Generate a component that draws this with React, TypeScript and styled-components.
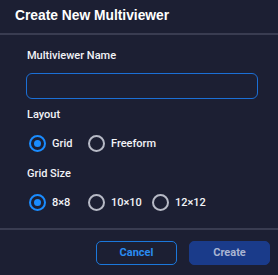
import { FC, useState } from 'react';
import styled, { createGlobalStyle } from 'styled-components';

const GlobalStyle = createGlobalStyle`
html, body {
margin:0;
padding:0;
background:#1c1f33;
}
body {
font-family: "Liberation Sans", Arial, sans-serif;
-webkit-font-smoothing: antialiased;
}
* { box-sizing:border-box; }
`;

/*----------Dialog--------------------*/
const Dialog = styled.div`
display:flex;
flex-direction:column;
width:278px;
height:275px;
background:#1c1f33;
color:#ffffff;
`;
/*----------Header--------------------*/
const Header = styled.div`
display:flex;
align-items:center;
height:35px;
padding:0 15px 2px 15px;
border-bottom:2px solid #393c51;
`;
const Title = styled.h2`
margin:0;
font-size:13.8px;
font-weight:700;
color:#ffffff;
`;
/*----------Body--------------------*/
const Body = styled.div`
display:flex;
flex-direction:column;
padding:14px 20px 0 26px;
flex:1;
`;
const Label = styled.div`
font-family: Roboto, "Liberation Sans", Arial, sans-serif;
font-size:11px;
font-weight:500;
color:#f2f3f7;
line-height:14px;
margin-left:1px;
`;
const NameInput = styled.input`
width:232px;
height:26px;
margin-top:10px;
background:transparent;
border:1.5px solid #1b6fd6;
border-radius:6px;
outline:none;
color:#fff;
font-family:inherit;
font-size:12px;
padding:0 8px;
`;
const Section = styled.div<{ $top: number }>`
display:flex;
flex-direction:column;
margin-top:${p => p.$top}px;
`;
const RadioRow = styled.div`
display:flex;
align-items:center;
margin-top:13px;
margin-left:3px;
`;
const RadioOption = styled.label<{ $width: number }>`
display:flex;
align-items:center;
width:${p => p.$width}px;
cursor:pointer;
font-family: Roboto, "Liberation Sans", Arial, sans-serif;
font-size:11px;
font-weight:500;
color:#f2f3f7;
`;
const RadioCircle = styled.span<{ $checked: boolean }>`
display:flex;
align-items:center;
justify-content:center;
width:17px;
height:17px;
border-radius:50%;
border:2px solid ${p => (p.$checked ? '#1a8cff' : '#b7bac6')};
margin-right:6px;
flex-shrink:0;
&::after {
content:'';
display:${p => (p.$checked ? 'block' : 'none')};
width:7px;
height:7px;
border-radius:50%;
background:#1a8cff;
}
`;
/*----------Footer--------------------*/
const Footer = styled.div`
display:flex;
justify-content:flex-end;
align-items:center;
gap:12px;
height:47px;
padding:0 8px 0 0;
border-top:2px solid #393c51;
`;
const Button = styled.button<{ $primary?: boolean }>`
width:81px;
height:24px;
border-radius:5px;
font-family: Roboto, "Liberation Sans", Arial, sans-serif;
font-size:11px;
font-weight:700;
cursor:pointer;
border:${p => (p.$primary ? '1.5px solid #1a3b8a' : '1.5px solid #1b78dc')};
background:${p => (p.$primary ? '#1a3b8a' : 'transparent')};
color:${p => (p.$primary ? '#a9b5d2' : '#2a8bf0')};
`;

const layoutOptions = [
    { id: 'grid', label: 'Grid', width: 59 },
    { id: 'freeform', label: 'Freeform', width: 80 },
];
const sizeOptions = [
    { id: '8', label: '8×8', width: 59 },
    { id: '10', label: '10×10', width: 64 },
    { id: '12', label: '12×12', width: 64 },
];

const App: FC = () => {
    const [layout, setLayout] = useState('grid');
    const [size, setSize] = useState('8');

    return (
        <Dialog>
            <GlobalStyle />
            <Header>
                <Title>Create New Multiviewer</Title>
            </Header>

            <Body>
                <Label>Multiviewer Name</Label>
                <NameInput type="text" />

                <Section $top={9}>
                    <Label>Layout</Label>
                    <RadioRow>
                        {layoutOptions.map(o => (
                            <RadioOption key={o.id} $width={o.width} onClick={() => setLayout(o.id)}>
                                <RadioCircle $checked={layout === o.id} />
                                {o.label}
                            </RadioOption>
                        ))}
                    </RadioRow>
                </Section>

                <Section $top={15}>
                    <Label>Grid Size</Label>
                    <RadioRow>
                        {sizeOptions.map(o => (
                            <RadioOption key={o.id} $width={o.width} onClick={() => setSize(o.id)}>
                                <RadioCircle $checked={size === o.id} />
                                {o.label}
                            </RadioOption>
                        ))}
                    </RadioRow>
                </Section>
            </Body>

            <Footer>
                <Button>Cancel</Button>
                <Button $primary>Create</Button>
            </Footer>
        </Dialog>
    );
}
export default App;
